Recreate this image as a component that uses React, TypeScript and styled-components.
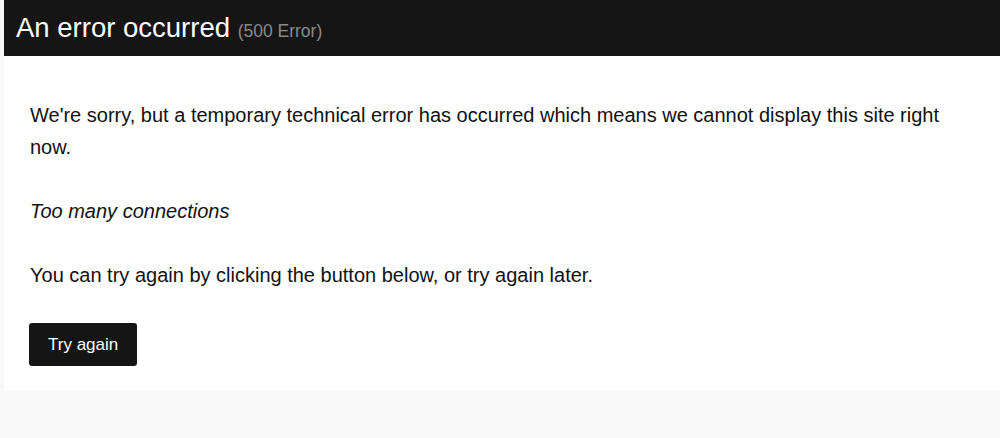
import React from 'react'
import styled, { createGlobalStyle } from 'styled-components'

const GlobalStyle = createGlobalStyle`
  html, body {
    margin: 0;
    padding: 0;
    background: #f8f8f8;
    font-family: 'Liberation Sans', Arial, sans-serif;
  }
`

const Page = styled.div`
  margin-left: 4px;
  background: #fff;
`

const Header = styled.header`
  background: #151515;
  height: 56px;
  display: flex;
  align-items: center;
  padding: 0 12px;
`

const Title = styled.h1`
  margin: 0;
  color: #fff;
  font-size: 27.5px;
  font-weight: normal;
  line-height: 1;
`

const Code = styled.small`
  color: #8a8a8a;
  font-size: 17.5px;
`

const Body = styled.main`
  padding: 43px 26px 25px;
`

const Paragraph = styled.p<{ $italic?: boolean }>`
  margin: 0 0 32px;
  color: #111;
  font-size: 20px;
  line-height: 32px;
  font-style: ${(p) => (p.$italic ? 'italic' : 'normal')};
`

const Button = styled.button`
  display: block;
  height: 43px;
  margin-left: -1px;
  padding: 0 19px;
  border: none;
  border-radius: 3px;
  background: #151515;
  color: #fff;
  font-family: inherit;
  font-size: 17px;
  cursor: pointer;
`

export default function App() {
  return (
    <>
      <GlobalStyle />
      <Page>
        <Header>
          <Title>
            An error occurred <Code>(500 Error)</Code>
          </Title>
        </Header>
        <Body>
          <Paragraph>
            We're sorry, but a temporary technical error has occurred which
            means we cannot display this site right now.
          </Paragraph>
          <Paragraph $italic>Too many connections</Paragraph>
          <Paragraph>
            You can try again by clicking the button below, or try again later.
          </Paragraph>
          <Button type="button">Try again</Button>
        </Body>
      </Page>
    </>
  )
}
